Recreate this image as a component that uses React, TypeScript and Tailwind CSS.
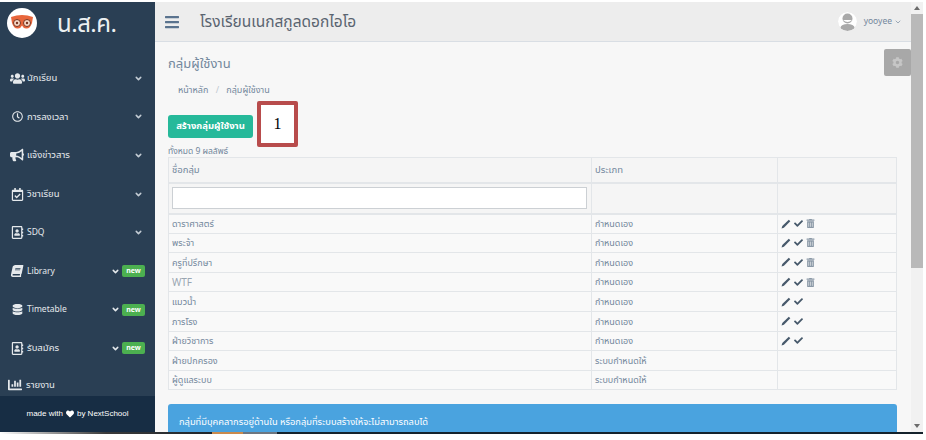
import { ChevronDown } from "lucide-react";
import { FaUsers, FaRegClock, FaBullhorn, FaRegCalendarCheck, FaRegAddressBook, FaBook, FaDatabase, FaChartBar, FaHeart, FaCheck, FaTrashAlt, FaBars, FaCog } from "react-icons/fa";

const menu = [
  { icon: <FaUsers size={15} />, label: "นักเรียน", size: "text-[9.500px]" },
  { icon: <FaRegClock size={11} />, label: "การลงเวลา", size: "text-[9.500px]" },
  { icon: <FaBullhorn size={14} />, label: "แจ้งข่าวสาร", size: "text-[9.500px]" },
  { icon: <FaRegCalendarCheck size={13} />, label: "วิชาเรียน", size: "text-[9.500px]" },
  { icon: <FaRegAddressBook size={13} />, label: "SDQ", size: "text-[8.500px]" },
  { icon: <FaBook size={12} className="-skew-x-12" />, label: "Library", isNew: true, size: "text-[8.500px]" },
  { icon: <FaDatabase size={11} />, label: "Timetable", isNew: true, size: "text-[8.500px]" },
  { icon: <FaRegAddressBook size={13} />, label: "รับสมัคร", isNew: true, size: "text-[9.500px]" },
];

const rows: [string, string, number][] = [
  ["ดาราศาสตร์", "กำหนดเอง", 3],
  ["พระจ้า", "กำหนดเอง", 3],
  ["ครูที่ปรึกษา", "กำหนดเอง", 3],
  ["WTF", "กำหนดเอง", 3],
  ["แมวน้ำ", "กำหนดเอง", 2],
  ["ภารโรง", "กำหนดเอง", 2],
  ["ฝ่ายวิชาการ", "กำหนดเอง", 2],
  ["ฝ่ายปกครอง", "ระบบกำหนดให้", 0],
  ["ผู้ดูแลระบบ", "ระบบกำหนดให้", 0],
];

function Logo() {
  return (
    <svg width="30" height="30" viewBox="0 0 30 30" className="shrink-0">
      <circle cx="15" cy="15" r="15" fill="#fff" />
      <path d="M4 9 Q15 5 26 9 L25 15 Q23 21 19 20.500 Q16 20 15 17.500 Q14 20 11 20.500 Q7 21 5 15 Z" fill="#e8663c" />
      <circle cx="10" cy="15" r="3.500" fill="#f6d9c8" stroke="#7a3520" strokeWidth="1" />
      <circle cx="20" cy="15" r="3.500" fill="#f6d9c8" stroke="#7a3520" strokeWidth="1" />
      <circle cx="10" cy="15" r="1.200" fill="#7a3520" />
      <circle cx="20" cy="15" r="1.200" fill="#7a3520" />
    </svg>
  );
}

function Avatar() {
  return (
    <svg width="19" height="19" viewBox="0 0 19 19" className="rounded-full">
      <circle cx="9.500" cy="9.500" r="9.500" fill="#fff" />
      <circle cx="9.500" cy="6.500" r="5" fill="#a9a9a9" />
      <ellipse cx="9.500" cy="15.500" rx="7" ry="3.500" fill="#a9a9a9" />
      <path d="M5 8 Q9.500 12 14 8 Z" fill="#fff" />
    </svg>
  );
}

function Pencil() {
  return (
    <svg width="10" height="10" viewBox="0 0 10 10" className="shrink-0">
      <path d="M0.500 9.500 L1.300 7 L7.800 0.700 L9.300 2.200 L2.900 8.700 Z" fill="currentColor" />
    </svg>
  );
}

export default function App() {
  return (
    <div className="w-[926px] h-[440px] bg-white overflow-hidden pt-[2px] font-['Noto_Sans','Noto_Sans_Thai','Liberation_Sans',sans-serif]">
      <div className="flex h-[430px] w-[923px]">
        <aside className="w-[155px] shrink-0 bg-[#2a3f54] flex flex-col text-[#e5e9ec]">
          <div className="h-[41px] flex items-center pl-[7px] gap-[20px]">
            <Logo />
            <span className="text-[24px] leading-none tracking-[-0.5px] text-[#ecf0f1]">น.ส.ค.</span>
          </div>
          <nav className="flex-1 pt-[16px] min-h-0 overflow-hidden">
            {menu.map((m) => (
              <div key={m.label} className="h-[38.6px] flex items-center pl-[8px] pr-[10px]">
                <span className="w-[18px] flex justify-center shrink-0">{m.icon}</span>
                <span className={`ml-[1px] flex-1 ${m.size}`}>{m.label}</span>
                <ChevronDown size={9} strokeWidth={4} className={m.isNew ? "mr-[2px]" : "mr-[2px] text-[#c3ccd4]"} />
                {m.isNew && (
                  <span className="bg-[#4cb050] text-white text-[7px] font-bold rounded-[2px] w-[23px] h-[12px] flex items-center justify-center">new</span>
                )}
              </div>
            ))}
            <div className="h-[34px] flex items-center pl-[8px]">
              <FaChartBar size={14} />
              <span className="ml-[4px] text-[9.500px]">รายงาน</span>
            </div>
          </nav>
          <div className="h-[36px] bg-[#172d44] flex items-center justify-center text-[8px] text-white font-['Liberation_Sans',sans-serif] gap-[3px] shrink-0">
            made with <FaHeart size={8} /> by NextSchool
          </div>
        </aside>

        <div className="flex-1 min-w-0 flex flex-col bg-[#f7f7f7]">
          <header className="h-[40px] bg-[#ededed] border-b border-[#d9dee4] flex items-center pl-[9px] pr-[9px] shrink-0">
            <FaBars size={16} className="text-[#5a738e]" />
            <span className="ml-[20px] text-[15.500px] text-[#5a6470]">โรงเรียนเนกสกูลดอกไอโอ</span>
            <div className="ml-auto flex items-center gap-[7px] text-[#73879c]">
              <Avatar />
              <span className="text-[8.500px]">yooyee</span>
              <ChevronDown size={8} className="-ml-[5px]" />
            </div>
          </header>

          <div className="flex-1 min-h-0 overflow-hidden flex">
            <main className="w-[742px] pl-[13px] shrink-0">
              <h1 className="text-[13px] leading-[18px] text-[#73879c] mt-[12px]">กลุ่มผู้ใช้งาน</h1>
              <div className="text-[9px] text-[#73879c] ml-[10px] mt-[12px] leading-[12px]">
                หน้าหลัก <span className="mx-[5px] text-[#c0c8d0]">/</span> กลุ่มผู้ใช้งาน
              </div>
              <div className="flex mt-[5px] items-start">
                <button className="mt-[14px] w-[85px] h-[23px] bg-[#26b99a] rounded-[3px] text-white text-[9.500px] font-bold flex items-center justify-center">
                  สร้างกลุ่มผู้ใช้งาน
                </button>
                <div className="ml-[4px] w-[41px] h-[46px] bg-white border-[4px] border-[#b84c4c] rounded-[2px] flex items-center justify-center text-[16px] text-black font-['Liberation_Serif',serif]">
                  1
                </div>
              </div>
              <div className="text-[8.500px] leading-[10px] text-[#73879c] -mt-[1px]">ทั้งหมด 9 ผลลัพธ์</div>
              <table className="w-[729px] table-fixed border-collapse text-[#73879c] mt-[1px]">
                <colgroup>
                  <col className="w-[423px]" />
                  <col className="w-[186px]" />
                  <col />
                </colgroup>
                <thead>
                  <tr className="h-[25px] text-[9.500px] bg-[#f5f5f5]">
                    <th className="border border-[#e3e6e9] border-b-2 font-normal text-left pl-[3px]">ชื่อกลุ่ม</th>
                    <th className="border border-[#e3e6e9] border-b-2 font-normal text-left pl-[3px]">ประเภท</th>
                    <th className="border border-[#e3e6e9] border-b-2" />
                  </tr>
                  <tr className="h-[31px] bg-[#f5f5f5]">
                    <th className="border border-[#e3e6e9] border-b-2 pl-[3px] pr-[3px]">
                      <input className="block w-[415px] h-[22px] bg-white border border-[#ccd0d4]" aria-label="ชื่อกลุ่ม" />
                    </th>
                    <th className="border border-[#e3e6e9] border-b-2" />
                    <th className="border border-[#e3e6e9] border-b-2" />
                  </tr>
                </thead>
                <tbody>
                  {rows.map(([a, b, n]) => (
                    <tr key={a} className="h-[19.600px] text-[9px] bg-[#f9f9f9]">
                      <td className={a === "WTF" ? "border border-[#e3e6e9] pl-[3px] text-[10px] text-[#9aa6b2]" : "border border-[#e3e6e9] pl-[3px]"}>{a}</td>
                      <td className="border border-[#e3e6e9] pl-[3px]">{b}</td>
                      <td className="border border-[#e3e6e9] pl-[3px]">
                        <div className="flex items-center gap-[3px] text-[#47596b]">
                          {n > 0 && <Pencil />}
                          {n > 0 && <FaCheck size={9} />}
                          {n > 2 && <FaTrashAlt size={9} className="text-[#8a98a6]" />}
                        </div>
                      </td>
                    </tr>
                  ))}
                </tbody>
              </table>
              <div className="mt-[14px] w-[729px] h-[40px] bg-[#4aa3df] rounded-t-[3px] text-white text-[9.300px] pl-[11px] pt-[11px]">
                กลุ่มที่มีบุคคลากรอยู่ด้านใน หรือกลุ่มที่ระบบสร้างให้จะไม่สามารถลบได้
              </div>
            </main>
            <div className="flex-1 min-w-0 relative">
              <div className="absolute right-[0px] top-[7px] w-[27px] h-[27px] bg-[#a8a8a8] rounded-[2px] flex items-center justify-center text-[#c6c6c6]">
                <FaCog size={11} />
              </div>
            </div>
          </div>
        </div>

        <div className="w-[12px] shrink-0 bg-[#f1f1f1] flex flex-col items-center justify-between relative">
          <span className="mt-[4px] w-0 h-0 border-x-[3px] border-x-transparent border-b-[4px] border-b-[#6b6b6b]" />
          <span className="absolute top-[12px] left-0 w-[12px] h-[254px] bg-[#b9b9b9]" />
          <span className="mb-[4px] w-0 h-0 border-x-[3px] border-x-transparent border-t-[4px] border-t-[#6b6b6b]" />
        </div>
      </div>
      <div className="h-[2px] w-[923px] flex">
        <span className="w-[212px] bg-gradient-to-r from-white via-[#3a3a3a] to-[#20262c]" />
        <span className="w-[31px] bg-[#c98a4e]" />
        <span className="w-[34px] bg-[#6d7680]" />
        <span className="flex-1 bg-[#14222c]" />
      </div>
    </div>
  );
}
